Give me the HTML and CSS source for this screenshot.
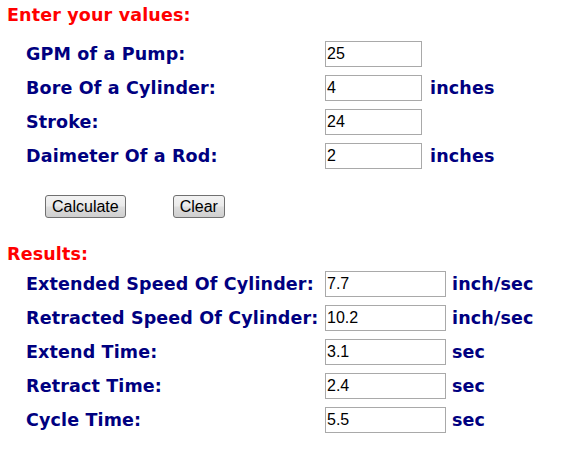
FILE: index.html
```html
<!DOCTYPE html>
<html lang="en">
<head>
    <meta charset="UTF-8">
    <title>Cylinder Speed Calculator</title>
    <link rel="stylesheet" href="styles.css">
</head>
<body>

    <!-- Input values -->
    <h3 class="section-title">Enter your values:</h3>
    <div class="form-grid values">
        <label for="gpm">GPM of a Pump:</label>
        <input type="text" id="gpm" value="25">
        <span class="unit"></span>

        <label for="bore">Bore Of a Cylinder:</label>
        <input type="text" id="bore" value="4">
        <span class="unit">inches</span>

        <label for="stroke">Stroke:</label>
        <input type="text" id="stroke" value="24">
        <span class="unit"></span>

        <label for="rod">Daimeter Of a Rod:</label>
        <input type="text" id="rod" value="2">
        <span class="unit">inches</span>
    </div>

    <div class="buttons">
        <button type="button">Calculate</button>
        <button type="button">Clear</button>
    </div>

    <!-- Results -->
    <h3 class="section-title results-title">Results:</h3>
    <div class="form-grid results">
        <label for="ext">Extended Speed Of Cylinder:</label>
        <input type="text" id="ext" value="7.7">
        <span class="unit">inch/sec</span>

        <label for="ret">Retracted Speed Of Cylinder:</label>
        <input type="text" id="ret" value="10.2">
        <span class="unit">inch/sec</span>

        <label for="extTime">Extend Time:</label>
        <input type="text" id="extTime" value="3.1">
        <span class="unit">sec</span>

        <label for="retTime">Retract Time:</label>
        <input type="text" id="retTime" value="2.4">
        <span class="unit">sec</span>

        <label for="cycle">Cycle Time:</label>
        <input type="text" id="cycle" value="5.5">
        <span class="unit">sec</span>
    </div>

</body>
</html>
```

FILE: styles.css
```css
body {
    margin: 0;
    padding: 6px 7px;
    background-color: #ffffff;
    font-family: "DejaVu Sans", Verdana, sans-serif;
}

/* Titres rouges */
.section-title {
    margin: 0;
    font-size: 17.5px;
    line-height: 19px;
    letter-spacing: 0.15px;
    font-weight: bold;
    color: #ff0000;
}
.results-title {
    margin-top: 27px;
}

/* Lignes label / champ / unite */
.form-grid {
    display: grid;
    grid-auto-rows: 34px;
    align-items: center;
    padding-left: 19px;
    margin-top: 3px;
}
.values {
    grid-template-columns: 299px 97px auto;
    margin-top: 12px;
}
.results {
    grid-template-columns: 299px 121px auto;
}
.form-grid label,
.form-grid .unit {
    font-size: 17.5px;
    line-height: 20px;
    letter-spacing: 0.15px;
    font-weight: bold;
    color: #000080;
    white-space: nowrap;
}
.form-grid .unit {
    padding-left: 8px;
}
.results .unit {
    padding-left: 6px;
}
.form-grid input {
    box-sizing: border-box;
    width: 100%;
    height: 26px;
    margin: 0;
    padding: 1px 1px;
    font-family: "Liberation Sans", Arial, sans-serif;
    font-size: 16px;
    color: #000000;
    border: 1px solid #a9a9a9;
}

/* Boutons */
.buttons {
    display: flex;
    gap: 47px;
    padding-left: 38px;
    margin-top: 22px;
}
.buttons button {
    height: 23px;
    padding: 0 6px;
    font-family: "Liberation Sans", Arial, sans-serif;
    font-size: 16px;
    color: #000000;
    background: linear-gradient(#f2f2f2, #ebebeb 45%, #dddddd 55%, #cfcfcf);
    border: 1px solid #707070;
    border-radius: 3px;
    cursor: pointer;
}
```
